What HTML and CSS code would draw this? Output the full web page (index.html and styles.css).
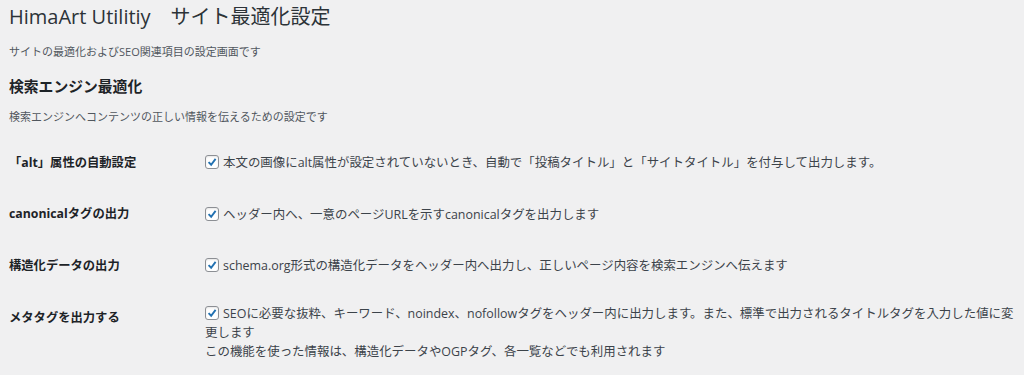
FILE: index.html
```html
<!DOCTYPE html>
<html lang="ja">

<head>
    <meta charset="UTF-8">
    <meta name="viewport" content="width=device-width, initial-scale=1.0">
    <title>HimaArt Utilitiy サイト最適化設定</title>
    <link rel="stylesheet" href="styles.css">
</head>

<body>

    <div class="wrap">
        <h1>HimaArt Utilitiy　サイト最適化設定</h1>
        <p class="description">サイトの最適化およびSEO関連項目の設定画面です</p>

        <h2>検索エンジン最適化</h2>
        <p class="description">検索エンジンへコンテンツの正しい情報を伝えるための設定です</p>

        <table class="form-table">
            <tr>
                <th>「alt」属性の自動設定</th>
                <td>
                    <label><span class="check"><svg viewBox="0 0 14 14"><path d="M3 7.2 L6 10.2 L11.2 3.4" /></svg></span>本文の画像にalt属性が設定されていないとき、自動で「投稿タイトル」と「サイトタイトル」を付与して出力します。</label>
                </td>
            </tr>
            <tr>
                <th>canonicalタグの出力</th>
                <td>
                    <label><span class="check"><svg viewBox="0 0 14 14"><path d="M3 7.2 L6 10.2 L11.2 3.4" /></svg></span>ヘッダー内へ、一意のページURLを示すcanonicalタグを出力します</label>
                </td>
            </tr>
            <tr>
                <th>構造化データの出力</th>
                <td>
                    <label><span class="check"><svg viewBox="0 0 14 14"><path d="M3 7.2 L6 10.2 L11.2 3.4" /></svg></span>schema.org形式の構造化データをヘッダー内へ出力し、正しいページ内容を検索エンジンへ伝えます</label>
                </td>
            </tr>
            <tr>
                <th>メタタグを出力する</th>
                <td>
                    <label><span class="check"><svg viewBox="0 0 14 14"><path d="M3 7.2 L6 10.2 L11.2 3.4" /></svg></span>SEOに必要な抜粋、キーワード、noindex、nofollowタグをヘッダー内に出力します。また、標準で出力されるタイトルタグを入力した値に変更します</label>
                    <br>この機能を使った情報は、構造化データやOGPタグ、各一覧などでも利用されます
                </td>
            </tr>
        </table>
    </div>

</body>

</html>
```

FILE: styles.css
```css
body {
    margin: 0;
    background-color: #f0f0f1;
    color: #3c434a;
    font-family: 'Open Sans', 'Noto Sans CJK JP', sans-serif;
    overflow: hidden;
}

.wrap {
    padding: 4px 0 0 9px;
}

h1 {
    margin: 0;
    font-size: 20px;
    font-weight: 400;
    line-height: 26px;
    color: #2c3338;
}

h2 {
    margin: 0;
    font-size: 14.8px;
    font-weight: 700;
    line-height: 20px;
    color: #1d2327;
}

.description {
    font-size: 11px;
    line-height: 16px;
    color: #50575e;
}

.wrap h1 + .description {
    margin: 14px 0 16px;
}

.wrap h2 + .description {
    margin: 13px 0 12px;
}

.form-table {
    border-collapse: collapse;
    width: 1013px;
}

.form-table th {
    width: 196px;
    padding: 17.8px 0;
    text-align: left;
    vertical-align: top;
    font-size: 12.3px;
    line-height: 16px;
    font-weight: 700;
    color: #1d2327;
}

.form-table td {
    padding: 12px 0;
    vertical-align: middle;
    font-size: 12.45px;
    line-height: 19px;
}

.check {
    display: inline-block;
    width: 12px;
    height: 12px;
    margin: 0 4px -2px 0;
    border: 1px solid #8c8f94;
    border-radius: 3px;
    background-color: #fff;
    box-shadow: inset 0 1px 2px rgba(0, 0, 0, 0.1);
}

.check svg {
    display: block;
    width: 12px;
    height: 12px;
    fill: none;
    stroke: #2271b1;
    stroke-width: 2.2;
}
```
